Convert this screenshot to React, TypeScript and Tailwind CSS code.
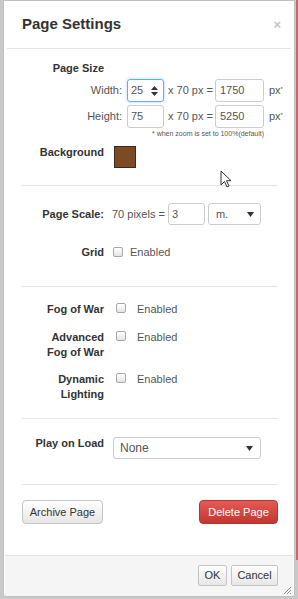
import React from 'react';

const Label: React.FC<{ children: React.ReactNode; className?: string }> = ({ children, className = '' }) => (
  <div className={`w-[82px] shrink-0 text-right font-bold text-[#333] ${className}`}>{children}</div>
);

const Checkbox: React.FC = () => (
  <span className="inline-block w-[10px] h-[10px] rounded-[2px] border border-[#a9a9a9] bg-gradient-to-b from-white to-[#e3e3e3]"></span>
);

const Caret: React.FC = () => (
  <svg width="7" height="5" viewBox="0 0 7 5" className="shrink-0">
    <path d="M0 0h7L3.5 5z" fill="#333" />
  </svg>
);

const Divider: React.FC<{ className?: string }> = ({ className = '' }) => (
  <div className={`w-[256px] h-px bg-[#e5e5e5] ${className}`}></div>
);

const App: React.FC = () => {
  return (
    <div className="relative w-[298px] h-[599px] bg-[#c9c9c9] overflow-hidden" style={{ fontFamily: '"Liberation Sans", Arial, sans-serif' }}>
      <div className="absolute right-0 top-0 w-[2px] h-[560px] bg-[#c46a6a]"></div>
      <div className="ml-[3px] w-[292px] h-[597px] bg-white border border-[#c0c0c0] rounded-b-[3px] flex flex-col text-[11px] text-[#555]">
        {/* Header */}
        <div className="h-[48px] mx-[3px] border-b border-[#e5e5e5] flex items-center justify-between pl-[15px] pr-[10px]">
          <span className="text-[15px] font-bold text-[#333]">Page Settings</span>
          <span className="text-[13px] font-bold text-[#c4c4c4] leading-none">×</span>
        </div>

        {/* Body */}
        <div className="flex-1 pl-[18px] pr-[4px] flex flex-col whitespace-nowrap">
          <div className="mt-[12px] leading-[14px] flex">
            <Label>Page Size</Label>
          </div>

          <div className="mt-[4px] flex items-center h-[23px]">
            <div className="w-[100px] shrink-0 text-right text-[#555]">Width:</div>
            <div className="ml-[5px] shrink-0 w-[37px] h-[23px] border border-[#66afe9] rounded-[3px] flex items-center justify-between pl-[3px] pr-[5px] shadow-[0_0_3px_rgba(102,175,233,0.6)]">
              <span>25</span>
              <svg width="7" height="10" viewBox="0 0 7 10">
                <path d="M0 4L3.5 0 7 4z" fill="#333" />
                <path d="M0 6h7L3.5 10z" fill="#333" />
              </svg>
            </div>
            <span className="ml-[4px] shrink-0">x 70 px =</span>
            <div className="ml-[2px] shrink-0 w-[49px] h-[23px] border border-[#ccc] rounded-[3px] flex items-center pl-[4px]">1750</div>
            <span className="ml-[5px] shrink-0">px<sup className="text-[6px]">*</sup></span>
          </div>

          <div className="mt-[3px] flex items-center h-[23px]">
            <div className="w-[100px] shrink-0 text-right text-[#555]">Height:</div>
            <div className="ml-[5px] shrink-0 w-[37px] h-[23px] border border-[#ccc] rounded-[3px] flex items-center pl-[3px]">75</div>
            <span className="ml-[4px] shrink-0">x 70 px =</span>
            <div className="ml-[2px] shrink-0 w-[49px] h-[23px] border border-[#ccc] rounded-[3px] flex items-center pl-[4px]">5250</div>
            <span className="ml-[5px] shrink-0">px<sup className="text-[6px]">*</sup></span>
          </div>

          <div className="mt-[1px] pl-[130px] text-[7px] leading-[10px] text-[#555]">* when zoom is set to 100%(default)</div>

          <div className="mt-[6px] flex items-start">
            <Label className="leading-[14px]">Background</Label>
            <div className="ml-[10px] mt-[1px] w-[22px] h-[22px] bg-[#7d4a26] border border-[#3d2a1c]"></div>
          </div>

          <Divider className="mt-[17px]" />

          <div className="mt-[17px] flex items-center h-[22px]">
            <Label>Page Scale:</Label>
            <span className="ml-[8px]">70 pixels =</span>
            <div className="ml-[3px] w-[37px] h-[22px] border border-[#ccc] rounded-[3px] flex items-center pl-[3px]">3</div>
            <div className="ml-[3px] w-[53px] h-[22px] border border-[#ccc] rounded-[3px] flex items-center justify-between pl-[7px] pr-[6px]">
              <span>m.</span>
              <Caret />
            </div>
          </div>

          <div className="mt-[20px] flex items-center leading-[14px]">
            <Label>Grid</Label>
            <span className="ml-[9px] flex"><Checkbox /></span>
            <span className="ml-[7px]">Enabled</span>
          </div>

          <Divider className="mt-[27px]" />

          <div className="mt-[15px] flex items-start leading-[15px]">
            <Label>Fog of War</Label>
            <span className="ml-[12px] mt-[1px] flex"><Checkbox /></span>
            <span className="ml-[11px]">Enabled</span>
          </div>

          <div className="mt-[13px] flex items-start leading-[15px]">
            <Label>Advanced<br />Fog of War</Label>
            <span className="ml-[12px] mt-[1px] flex"><Checkbox /></span>
            <span className="ml-[11px]">Enabled</span>
          </div>

          <div className="mt-[12px] flex items-start leading-[15px]">
            <Label>Dynamic<br />Lighting</Label>
            <span className="ml-[12px] mt-[1px] flex"><Checkbox /></span>
            <span className="ml-[11px]">Enabled</span>
          </div>

          <Divider className="mt-[16px]" />

          <div className="mt-[18px] flex items-start">
            <Label className="mt-[-1px] leading-[14px]">Play on Load</Label>
            <div className="ml-[9px] w-[148px] h-[22px] border border-[#ccc] rounded-[3px] flex items-center justify-between pl-[6px] pr-[7px] text-[12px]">
              <span>None</span>
              <Caret />
            </div>
          </div>

          <Divider className="mt-[25px]" />

          <div className="mt-[15px] w-[256px] flex items-center justify-between">
            <button className="w-[81px] h-[24px] rounded-[4px] border border-[#c5c5c5] bg-gradient-to-b from-white to-[#e6e6e6] text-[#333] text-[11px]">Archive Page</button>
            <button className="w-[79px] h-[24px] rounded-[4px] border border-[#b33630] bg-gradient-to-b from-[#e65a55] to-[#c2362f] text-white text-[11px]">Delete Page</button>
          </div>
        </div>

        {/* Footer */}
        <div className="h-[41px] mx-[1px] border-t border-[#e2e2e2] bg-[#f5f5f5] rounded-b-[3px] relative flex items-start justify-end pr-[15px] pt-[9px] gap-[4px]">
          <button className="w-[29px] h-[21px] rounded-[2px] border border-[#c5c5c5] bg-gradient-to-b from-white to-[#e6e6e6] text-[#333] text-[11px]">OK</button>
          <button className="w-[47px] h-[21px] rounded-[2px] border border-[#c5c5c5] bg-gradient-to-b from-white to-[#e6e6e6] text-[#333] text-[11px]">Cancel</button>
          <svg width="9" height="9" viewBox="0 0 9 9" className="absolute right-[1px] bottom-[1px]">
            <path d="M8 1L1 8M8 4L4 8M8 7L7 8" stroke="#8a8a8a" strokeWidth="1" />
          </svg>
        </div>
      </div>

      {/* mouse cursor */}
      <svg width="12" height="18" viewBox="0 0 12 18" className="absolute left-[220px] top-[170px]">
        <path d="M1 1v14l3.5-3.5 2.5 5.5 2-1-2.5-5.3H11z" fill="white" stroke="#333" strokeWidth="1" strokeLinejoin="round" />
      </svg>
    </div>
  );
};

export default App;
